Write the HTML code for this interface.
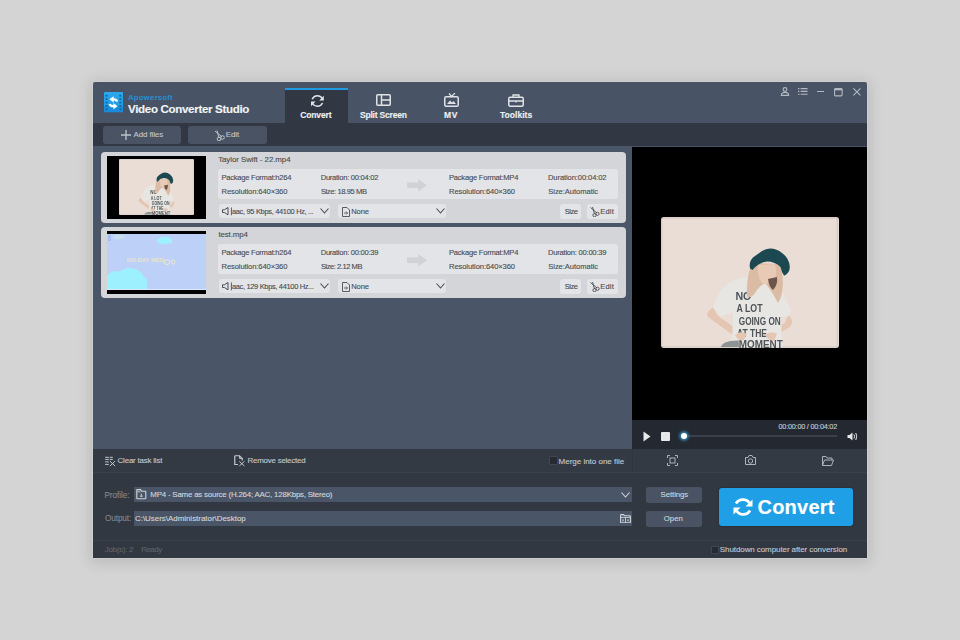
<!DOCTYPE html>
<html><head><meta charset="utf-8">
<style>
*{margin:0;padding:0;box-sizing:border-box}
html,body{width:960px;height:640px;overflow:hidden;background:#d4d4d4;font-family:"Liberation Sans", sans-serif}
.a{position:absolute;display:block}
.t{position:absolute;white-space:nowrap;-webkit-text-stroke:0.12px}
</style></head><body>
<svg width="0" height="0" style="position:absolute"><defs><filter id="soft" x="-10%" y="-10%" width="120%" height="120%"><feGaussianBlur stdDeviation="0.5"/></filter></defs></svg>
<div class="a" style="left:93px;top:82px;width:774px;height:476px;background:#485465;box-shadow:0 0 0 1px rgba(225,225,225,0.35),0 2px 14px 3px rgba(0,0,0,0.12);border-radius:2px 2px 1px 1px"></div>
<div class="a" style="left:93px;top:123px;width:774px;height:23px;background:#323843;"></div>
<div class="a" style="left:284.5px;top:90px;width:63.5px;height:33px;background:#323843;"></div>
<div class="a" style="left:284.5px;top:88px;width:63.5px;height:2.3px;background:#1e9be0;"></div>
<div class="a" style="left:93px;top:146px;width:539px;height:303px;background:#4a5567;"></div>
<div class="a" style="left:632px;top:146.5px;width:235px;height:273.5px;background:#000;"></div>
<div class="a" style="left:632px;top:420px;width:235px;height:29px;background:#242931;"></div>
<div class="a" style="left:93px;top:449px;width:774px;height:23px;background:#333a44;"></div>
<div class="a" style="left:632px;top:449px;width:1px;height:23px;background:#2f353e;"></div>
<div class="a" style="left:93px;top:472px;width:774px;height:86px;background:#323841;"></div>
<div class="a" style="left:93px;top:472px;width:774px;height:1px;background:#3a414b;"></div>
<div class="a" style="left:93px;top:540px;width:774px;height:1px;background:#3a414b;"></div>
<svg class="a" style="left:104px;top:92.3px;" width="19" height="20.3" viewBox="0 0 19 20.3"><defs><linearGradient id="lg" x1="0" y1="0" x2="0" y2="1"><stop offset="0" stop-color="#2ca8ec"/><stop offset="0.68" stop-color="#219ce6"/><stop offset="0.7" stop-color="#1a8fdf"/><stop offset="1" stop-color="#1a8bdc"/></linearGradient></defs><rect x="0" y="0" width="19" height="20.3" rx="0.8" fill="url(#lg)"/><g fill="#0f5f94"><rect x="1.6" y="2.9" width="1.9" height="1.6"/><rect x="15.4" y="2.9" width="1.9" height="1.6"/><rect x="1.6" y="6.3" width="1.9" height="1.6"/><rect x="15.4" y="6.3" width="1.9" height="1.6"/><rect x="1.6" y="9.7" width="1.9" height="1.6"/><rect x="15.4" y="9.7" width="1.9" height="1.6"/><rect x="1.6" y="13.1" width="1.9" height="1.6"/><rect x="15.4" y="13.1" width="1.9" height="1.6"/><rect x="1.6" y="16.5" width="1.9" height="1.6"/><rect x="15.4" y="16.5" width="1.9" height="1.6"/></g><path d="M13 9.6 Q12.6 7.3 9.6 7.3 H8.2" stroke="#fff" stroke-width="2.3" fill="none"/><path d="M5.4 7.3 L9.6 4.2 V10.4 Z" fill="#fff"/><path d="M5.8 12 Q6.2 14.2 9.2 14.2 H10.6" stroke="#fff" stroke-width="2.3" fill="none"/><path d="M13.6 14.2 L9.4 11.1 V17.3 Z" fill="#fff"/></svg>
<div class="t" style="left:128.30px;top:94.00px;font-size:7.8px;line-height:7.8px;color:#1e9be0;font-weight:normal;letter-spacing:0.556px;">Apowersoft</div>
<div class="t" style="left:128.00px;top:103.00px;font-size:11.6px;line-height:11.6px;color:#f2f4f6;font-weight:bold;letter-spacing:-0.345px;">Video Converter Studio</div>
<svg class="a" style="left:309.5px;top:93.5px;" width="15" height="14" viewBox="0 0 15 14"><path d="M12.6 5.0 A5.8 5.8 0 0 0 2.2 5.2" stroke="#dfe3e8" stroke-width="1.5" fill="none"/>
<path d="M2.1 8.8 A5.8 5.8 0 0 0 12.6 9.0" stroke="#dfe3e8" stroke-width="1.5" fill="none"/>
<path d="M13.8 1.8 L13.8 6.4 L9.2 6.4 Z" fill="#dfe3e8"/><path d="M1.0 12.2 L1.0 7.6 L5.6 7.6 Z" fill="#dfe3e8"/></svg>
<div class="t" style="left:300.15px;top:111.00px;font-size:8.5px;line-height:8.5px;color:#eef0f3;font-weight:bold;letter-spacing:-0.125px;">Convert</div>
<svg class="a" style="left:376px;top:94px;" width="15" height="12" viewBox="0 0 15 12"><rect x="0.75" y="0.75" width="13.5" height="10.5" rx="1" stroke="#dfe3e8" stroke-width="1.5" fill="none"/>
<path d="M5.5 1 V11 M5.5 6 H14" stroke="#dfe3e8" stroke-width="1.5"/></svg>
<div class="t" style="left:359.95px;top:111.00px;font-size:8.5px;line-height:8.5px;color:#eef0f3;font-weight:bold;letter-spacing:-0.191px;">Split Screen</div>
<svg class="a" style="left:444px;top:93px;" width="15" height="14" viewBox="0 0 15 14"><rect x="0.75" y="3.75" width="13.5" height="9.5" rx="1.5" stroke="#dfe3e8" stroke-width="1.5" fill="none"/>
<path d="M5 0.5 L7.5 3.5 L11 0" stroke="#dfe3e8" stroke-width="1.2" fill="none"/>
<path d="M3 11 L6 7.5 L8 9.5 L9.5 8 L12 11 Z" fill="#dfe3e8"/></svg>
<div class="t" style="left:444.00px;top:111.00px;font-size:8.5px;line-height:8.5px;color:#eef0f3;font-weight:bold;letter-spacing:0.750px;">MV</div>
<svg class="a" style="left:508px;top:94px;" width="16" height="13" viewBox="0 0 16 13"><rect x="0.75" y="3.25" width="14.5" height="9" rx="1.5" stroke="#dfe3e8" stroke-width="1.5" fill="none"/>
<path d="M5 3 V1 H11 V3 M1 7 H15 M8 6.5 V8.5" stroke="#dfe3e8" stroke-width="1.3" fill="none"/></svg>
<div class="t" style="left:500.00px;top:111.00px;font-size:8.5px;line-height:8.5px;color:#eef0f3;font-weight:bold;letter-spacing:0.036px;">Toolkits</div>
<svg class="a" style="left:780px;top:87px;" width="10" height="9" viewBox="0 0 10 9"><circle cx="5" cy="2.5" r="1.9" stroke="#b3b9c1" stroke-width="1.1" fill="none"/><path d="M1.3 8.4 Q1.3 5.4 5 5.4 Q8.7 5.4 8.7 8.4 Z" stroke="#b3b9c1" stroke-width="1.1" fill="none"/></svg>
<svg class="a" style="left:797.5px;top:88px;" width="10" height="7" viewBox="0 0 10 7"><path d="M0 0.6 H1.4 M2.6 0.6 H9.5 M0 3.4 H1.4 M2.6 3.4 H9.5 M0 6.2 H1.4 M2.6 6.2 H9.5" stroke="#b3b9c1" stroke-width="1.1"/></svg>
<div class="a" style="left:816.7px;top:90.8px;width:7.5px;height:1.6px;background:#b3b9c1;"></div>
<svg class="a" style="left:834.4px;top:87.5px;" width="9" height="9" viewBox="0 0 9 9"><rect x="0.55" y="0.55" width="7.6" height="7.3" rx="1" stroke="#b3b9c1" stroke-width="1.1" fill="none"/><rect x="0.55" y="0.55" width="7.6" height="1.8" fill="#b3b9c1"/></svg>
<svg class="a" style="left:853.3px;top:88px;" width="8" height="8" viewBox="0 0 8 8"><path d="M0.4 0.4 L7.4 7.4 M7.4 0.4 L0.4 7.4" stroke="#b3b9c1" stroke-width="1.1"/></svg>
<div class="a" style="left:103px;top:126px;width:78px;height:18px;background:#4a5363;border-radius:3px"></div>
<div class="a" style="left:188px;top:126px;width:79px;height:18px;background:#4a5363;border-radius:3px"></div>
<svg class="a" style="left:121px;top:130px;" width="10" height="10" viewBox="0 0 10 10"><path d="M5 0 V10 M0 5 H10" stroke="#bfc4cb" stroke-width="1.3"/></svg>
<div class="t" style="left:133.60px;top:131.20px;font-size:8px;line-height:8px;color:#bfc4cb;font-weight:normal;letter-spacing:-0.138px;">Add files</div>
<svg class="a" style="left:214px;top:130px;" width="11" height="11" viewBox="0 0 11 11"><path d="M1 1 L8 7 M3 0.5 L5 8" stroke="#bfc4cb" stroke-width="1"/><circle cx="8.5" cy="7.5" r="1.8" stroke="#bfc4cb" stroke-width="1" fill="none"/><circle cx="5" cy="9" r="1.8" stroke="#bfc4cb" stroke-width="1" fill="none"/></svg>
<div class="t" style="left:225.65px;top:131.00px;font-size:8px;line-height:8px;color:#bfc4cb;font-weight:normal;letter-spacing:-0.067px;">Edit</div>
<div class="a" style="left:101px;top:151.5px;width:525px;height:71px;background:#d4d5d9;border-radius:4px"></div>
<div class="a" style="left:107px;top:155.5px;width:99px;height:63px;background:#000;"></div>
<svg class="a" style="left:119px;top:159px" width="75" height="56" viewBox="0 0 178 131" preserveAspectRatio="none"><rect x="0" y="0" width="178" height="131" rx="3" fill="#e9ddd6"/>
<path d="M0.8 3 Q0.8 0.9 3 0.9 H174 Q176.3 0.9 176.3 3 V128 Q176.3 130 174 130 H3 Q0.8 130 0.8 128 Z" fill="none" stroke="#cbbfb8" stroke-width="0.8"/>
<g filter="url(#soft)"><path d="M52 90 Q44 96 47 100 L76 121 L81 116 L57 99 Z" fill="#e4c6b3"/>
<path d="M127 97 Q134 104 129 110 L110 121 L106 116 L124 106 Z" fill="#e4c6b3"/>
<path d="M73 63 Q58 70 51.8 90.4 L59.7 99.5 L72 95 L71 130 L121 130 L120 100 L127.6 99.5 L130 93 L117 66 Q102 60 86 60 Z" fill="#e8e6e3"/>
<g font-family="Liberation Sans" font-weight="bold" fill="#4d5458">
<text x="74.4" y="82.5" font-size="10.5" textLength="16" lengthAdjust="spacingAndGlyphs">NO</text>
<text x="75.5" y="95" font-size="10.5" textLength="26" lengthAdjust="spacingAndGlyphs">A LOT</text>
<text x="77.8" y="107.5" font-size="10.5" textLength="42" lengthAdjust="spacingAndGlyphs">GOING ON</text>
<text x="76" y="120" font-size="10.5" textLength="30" lengthAdjust="spacingAndGlyphs">AT THE</text>
<text x="77.8" y="130.5" font-size="10.5" textLength="44" lengthAdjust="spacingAndGlyphs">MOMENT</text>
</g>
<path d="M91 46 Q85 60 86 80 Q91 82 96 73 Q100 68 104 66 Q111 74 117 86 Q123 77 121.5 60 Q121 52 119 47 Z" fill="#dbbba3"/>
<path d="M97 48 Q96 60 101 66 Q108 68 114 62 Q116 54 114 47 Z" fill="#e8cab7"/>
<path d="M107 62 Q108 70 112 73 Q117 68 116 60 Z" fill="#6e554c"/>
<path d="M74 118 Q80 113 86 117 L82 124 Q76 123 74 118 Z" fill="#e4c6b3"/>
<path d="M104 118 Q110 113 116 117 L113 124 Q106 123 104 118 Z" fill="#e4c6b3"/>
<path d="M89.1 51.5 Q87.5 45 92 40.5 Q98 36 101 34 Q105 31.5 109 31.5 Q116 31.5 121 36 Q128 41 128.8 49.6 Q129 56 123.1 58.7 Q120.5 55 119.5 50 Q114 44.5 106 44.5 Q97 45.5 91.5 53 Z" fill="#1d4a51"/>
<path d="M59.7 130 Q62 123 77.8 123.5 L78 130 Z" fill="#8e9493"/></g></svg>
<div class="t" style="left:218.15px;top:156.30px;font-size:7.9px;line-height:7.9px;color:#4a4d52;font-weight:normal;letter-spacing:-0.062px;">Taylor Swift - 22.mp4</div>
<div class="a" style="left:218px;top:169.0px;width:400px;height:30px;background:#e3e4e7;border-radius:3px"></div>
<div class="t" style="left:221.50px;top:174.25px;font-size:7.6px;line-height:7.6px;color:#4a4d52;font-weight:normal;letter-spacing:-0.267px;">Package Format:h264</div>
<div class="t" style="left:221.50px;top:187.75px;font-size:7.6px;line-height:7.6px;color:#4a4d52;font-weight:normal;letter-spacing:-0.106px;">Resolution:640×360</div>
<div class="t" style="left:320.70px;top:174.25px;font-size:7.6px;line-height:7.6px;color:#4a4d52;font-weight:normal;letter-spacing:-0.279px;">Duration: 00:04:02</div>
<div class="t" style="left:320.95px;top:187.75px;font-size:7.6px;line-height:7.6px;color:#4a4d52;font-weight:normal;letter-spacing:-0.415px;">Size: 18.95 MB</div>
<svg class="a" style="left:407px;top:178.8px;" width="21" height="13" viewBox="0 0 21 13"><path d="M0 3.6 H11.3 V0 L20 6.25 L11.3 12.5 V8.9 H0 Z" fill="#cfd2d6"/></svg>
<div class="t" style="left:449.00px;top:174.25px;font-size:7.6px;line-height:7.6px;color:#4a4d52;font-weight:normal;letter-spacing:-0.238px;">Package Format:MP4</div>
<div class="t" style="left:449.00px;top:187.75px;font-size:7.6px;line-height:7.6px;color:#4a4d52;font-weight:normal;letter-spacing:-0.100px;">Resolution:640×360</div>
<div class="t" style="left:548.00px;top:174.25px;font-size:7.6px;line-height:7.6px;color:#4a4d52;font-weight:normal;letter-spacing:-0.112px;">Duration:00:04:02</div>
<div class="t" style="left:548.25px;top:187.75px;font-size:7.6px;line-height:7.6px;color:#4a4d52;font-weight:normal;letter-spacing:-0.058px;">Size:Automatic</div>
<div class="a" style="left:219px;top:203.7px;width:111px;height:14.5px;background:#e3e4e7;border-radius:3px"></div>
<svg class="a" style="left:222px;top:207.0px;" width="11" height="9" viewBox="0 0 11 9"><path d="M0.5 2.8 H2.4 L6 0.5 V7.8 L2.4 5.5 H0.5 Z" stroke="#4a4d52" stroke-width="1" fill="none" stroke-linejoin="round"/><path d="M9.4 0.5 V8.3" stroke="#4a4d52" stroke-width="0.9" fill="none"/></svg>
<div class="t" style="left:231.95px;top:207.75px;font-size:7.5px;line-height:7.5px;color:#4a4d52;font-weight:normal;letter-spacing:-0.335px;">aac, 95 Kbps, 44100 Hz, ...</div>
<svg class="a" style="left:319.5px;top:208.0px;" width="9" height="6" viewBox="0 0 9 6"><path d="M0.5 0.5 L4.5 5 L8.5 0.5" stroke="#4a4d52" stroke-width="1.1" fill="none"/></svg>
<div class="a" style="left:338px;top:203.9px;width:108px;height:14px;background:#e3e4e7;border-radius:3px"></div>
<svg class="a" style="left:342px;top:207.0px;" width="8" height="10" viewBox="0 0 8 10"><path d="M0.5 0.5 H5 L7.5 3 V9.5 H0.5 Z" stroke="#4a4d52" stroke-width="0.9" fill="none"/><path d="M2 6 H5.5 M4 4.5 L5.5 6 L4 7.5" stroke="#4a4d52" stroke-width="0.8" fill="none"/></svg>
<div class="t" style="left:351.20px;top:207.75px;font-size:7.6px;line-height:7.6px;color:#4a4d52;font-weight:normal;letter-spacing:-0.083px;">None</div>
<svg class="a" style="left:436px;top:208.0px;" width="9" height="6" viewBox="0 0 9 6"><path d="M0.5 0.5 L4.5 5 L8.5 0.5" stroke="#4a4d52" stroke-width="1.1" fill="none"/></svg>
<div class="a" style="left:560px;top:204.0px;width:21px;height:14.5px;background:#e3e4e7;border-radius:3px"></div>
<div class="t" style="left:564.75px;top:207.75px;font-size:7.5px;line-height:7.5px;color:#4a4d52;font-weight:normal;letter-spacing:-0.500px;">Size</div>
<div class="a" style="left:587px;top:204.0px;width:31px;height:14.5px;background:#e3e4e7;border-radius:3px"></div>
<svg class="a" style="left:590px;top:207.0px;" width="10" height="10" viewBox="0 0 10 10"><path d="M0.5 0.5 L7 6 M2.5 0 L4.5 7" stroke="#4a4d52" stroke-width="0.9"/><circle cx="7.5" cy="6.8" r="1.6" stroke="#4a4d52" stroke-width="0.9" fill="none"/><circle cx="4.5" cy="8.2" r="1.6" stroke="#4a4d52" stroke-width="0.9" fill="none"/></svg>
<div class="t" style="left:600.20px;top:207.75px;font-size:7.5px;line-height:7.5px;color:#4a4d52;font-weight:normal;letter-spacing:0.200px;">Edit</div>
<div class="a" style="left:101px;top:226.5px;width:525px;height:71px;background:#d4d5d9;border-radius:4px"></div>
<div class="a" style="left:107px;top:230.5px;width:99px;height:63px;background:#000;"></div>
<svg class="a" style="left:107px;top:234px" width="99" height="56" viewBox="0 0 99 56">
<rect x="0" y="0" width="99" height="56" fill="#bdd0f8"/>
<g fill="#9df0fd">
<ellipse cx="23" cy="46" rx="14" ry="12"/><ellipse cx="9" cy="46" rx="10" ry="9"/><ellipse cx="33" cy="49" rx="7" ry="8"/><rect x="0" y="47" width="40" height="9"/>
<ellipse cx="57.5" cy="6.5" rx="7.5" ry="3.8"/><rect x="50" y="6" width="15" height="3"/>
</g>
<ellipse cx="12" cy="3" rx="6" ry="2.2" fill="#c6dcee"/><rect x="1" y="1" width="3" height="6" fill="#a9bdf2"/>
<text x="19" y="27.5" font-family="Liberation Sans" font-weight="bold" font-size="5" fill="#e9e2cf" textLength="38" lengthAdjust="spacingAndGlyphs">100-DAY MED</text>
<circle cx="60" cy="28" r="2.5" fill="none" stroke="#e6e0d4" stroke-width="1.2"/><circle cx="66" cy="28" r="1.8" fill="none" stroke="#e6e0d4" stroke-width="1.2"/>
<rect x="0" y="55" width="99" height="1" fill="#dfe8fb"/>
</svg>
<div class="t" style="left:218.40px;top:231.30px;font-size:7.9px;line-height:7.9px;color:#4a4d52;font-weight:normal;letter-spacing:-0.100px;">test.mp4</div>
<div class="a" style="left:218px;top:244.0px;width:400px;height:30px;background:#e3e4e7;border-radius:3px"></div>
<div class="t" style="left:221.50px;top:249.25px;font-size:7.6px;line-height:7.6px;color:#4a4d52;font-weight:normal;letter-spacing:-0.267px;">Package Format:h264</div>
<div class="t" style="left:221.50px;top:262.75px;font-size:7.6px;line-height:7.6px;color:#4a4d52;font-weight:normal;letter-spacing:-0.106px;">Resolution:640×360</div>
<div class="t" style="left:320.70px;top:249.25px;font-size:7.6px;line-height:7.6px;color:#4a4d52;font-weight:normal;letter-spacing:-0.279px;">Duration: 00:00:39</div>
<div class="t" style="left:320.95px;top:262.75px;font-size:7.6px;line-height:7.6px;color:#4a4d52;font-weight:normal;letter-spacing:-0.479px;">Size: 2.12 MB</div>
<svg class="a" style="left:407px;top:253.8px;" width="21" height="13" viewBox="0 0 21 13"><path d="M0 3.6 H11.3 V0 L20 6.25 L11.3 12.5 V8.9 H0 Z" fill="#cfd2d6"/></svg>
<div class="t" style="left:449.00px;top:249.25px;font-size:7.6px;line-height:7.6px;color:#4a4d52;font-weight:normal;letter-spacing:-0.238px;">Package Format:MP4</div>
<div class="t" style="left:449.00px;top:262.75px;font-size:7.6px;line-height:7.6px;color:#4a4d52;font-weight:normal;letter-spacing:-0.100px;">Resolution:640×360</div>
<div class="t" style="left:548.00px;top:249.25px;font-size:7.6px;line-height:7.6px;color:#4a4d52;font-weight:normal;letter-spacing:-0.238px;">Duration: 00:00:39</div>
<div class="t" style="left:548.25px;top:262.75px;font-size:7.6px;line-height:7.6px;color:#4a4d52;font-weight:normal;letter-spacing:-0.058px;">Size:Automatic</div>
<div class="a" style="left:219px;top:278.7px;width:111px;height:14.5px;background:#e3e4e7;border-radius:3px"></div>
<svg class="a" style="left:222px;top:282.0px;" width="11" height="9" viewBox="0 0 11 9"><path d="M0.5 2.8 H2.4 L6 0.5 V7.8 L2.4 5.5 H0.5 Z" stroke="#4a4d52" stroke-width="1" fill="none" stroke-linejoin="round"/><path d="M9.4 0.5 V8.3" stroke="#4a4d52" stroke-width="0.9" fill="none"/></svg>
<div class="t" style="left:231.95px;top:282.75px;font-size:7.5px;line-height:7.5px;color:#4a4d52;font-weight:normal;letter-spacing:-0.348px;">aac, 129 Kbps, 44100 Hz...</div>
<svg class="a" style="left:319.5px;top:283.0px;" width="9" height="6" viewBox="0 0 9 6"><path d="M0.5 0.5 L4.5 5 L8.5 0.5" stroke="#4a4d52" stroke-width="1.1" fill="none"/></svg>
<div class="a" style="left:338px;top:278.9px;width:108px;height:14px;background:#e3e4e7;border-radius:3px"></div>
<svg class="a" style="left:342px;top:282.0px;" width="8" height="10" viewBox="0 0 8 10"><path d="M0.5 0.5 H5 L7.5 3 V9.5 H0.5 Z" stroke="#4a4d52" stroke-width="0.9" fill="none"/><path d="M2 6 H5.5 M4 4.5 L5.5 6 L4 7.5" stroke="#4a4d52" stroke-width="0.8" fill="none"/></svg>
<div class="t" style="left:351.20px;top:282.75px;font-size:7.6px;line-height:7.6px;color:#4a4d52;font-weight:normal;letter-spacing:-0.083px;">None</div>
<svg class="a" style="left:436px;top:283.0px;" width="9" height="6" viewBox="0 0 9 6"><path d="M0.5 0.5 L4.5 5 L8.5 0.5" stroke="#4a4d52" stroke-width="1.1" fill="none"/></svg>
<div class="a" style="left:560px;top:279.0px;width:21px;height:14.5px;background:#e3e4e7;border-radius:3px"></div>
<div class="t" style="left:564.75px;top:282.75px;font-size:7.5px;line-height:7.5px;color:#4a4d52;font-weight:normal;letter-spacing:-0.500px;">Size</div>
<div class="a" style="left:587px;top:279.0px;width:31px;height:14.5px;background:#e3e4e7;border-radius:3px"></div>
<svg class="a" style="left:590px;top:282.0px;" width="10" height="10" viewBox="0 0 10 10"><path d="M0.5 0.5 L7 6 M2.5 0 L4.5 7" stroke="#4a4d52" stroke-width="0.9"/><circle cx="7.5" cy="6.8" r="1.6" stroke="#4a4d52" stroke-width="0.9" fill="none"/><circle cx="4.5" cy="8.2" r="1.6" stroke="#4a4d52" stroke-width="0.9" fill="none"/></svg>
<div class="t" style="left:600.20px;top:282.75px;font-size:7.5px;line-height:7.5px;color:#4a4d52;font-weight:normal;letter-spacing:0.200px;">Edit</div>
<svg class="a" style="left:661px;top:217px" width="178" height="131" viewBox="0 0 178 131"><rect x="0" y="0" width="178" height="131" rx="3" fill="#e9ddd6"/>
<path d="M0.8 3 Q0.8 0.9 3 0.9 H174 Q176.3 0.9 176.3 3 V128 Q176.3 130 174 130 H3 Q0.8 130 0.8 128 Z" fill="none" stroke="#cbbfb8" stroke-width="0.8"/>
<g filter="url(#soft)"><path d="M52 90 Q44 96 47 100 L76 121 L81 116 L57 99 Z" fill="#e4c6b3"/>
<path d="M127 97 Q134 104 129 110 L110 121 L106 116 L124 106 Z" fill="#e4c6b3"/>
<path d="M73 63 Q58 70 51.8 90.4 L59.7 99.5 L72 95 L71 130 L121 130 L120 100 L127.6 99.5 L130 93 L117 66 Q102 60 86 60 Z" fill="#e8e6e3"/>
<g font-family="Liberation Sans" font-weight="bold" fill="#4d5458">
<text x="74.4" y="82.5" font-size="10.5" textLength="16" lengthAdjust="spacingAndGlyphs">NO</text>
<text x="75.5" y="95" font-size="10.5" textLength="26" lengthAdjust="spacingAndGlyphs">A LOT</text>
<text x="77.8" y="107.5" font-size="10.5" textLength="42" lengthAdjust="spacingAndGlyphs">GOING ON</text>
<text x="76" y="120" font-size="10.5" textLength="30" lengthAdjust="spacingAndGlyphs">AT THE</text>
<text x="77.8" y="130.5" font-size="10.5" textLength="44" lengthAdjust="spacingAndGlyphs">MOMENT</text>
</g>
<path d="M91 46 Q85 60 86 80 Q91 82 96 73 Q100 68 104 66 Q111 74 117 86 Q123 77 121.5 60 Q121 52 119 47 Z" fill="#dbbba3"/>
<path d="M97 48 Q96 60 101 66 Q108 68 114 62 Q116 54 114 47 Z" fill="#e8cab7"/>
<path d="M107 62 Q108 70 112 73 Q117 68 116 60 Z" fill="#6e554c"/>
<path d="M74 118 Q80 113 86 117 L82 124 Q76 123 74 118 Z" fill="#e4c6b3"/>
<path d="M104 118 Q110 113 116 117 L113 124 Q106 123 104 118 Z" fill="#e4c6b3"/>
<path d="M89.1 51.5 Q87.5 45 92 40.5 Q98 36 101 34 Q105 31.5 109 31.5 Q116 31.5 121 36 Q128 41 128.8 49.6 Q129 56 123.1 58.7 Q120.5 55 119.5 50 Q114 44.5 106 44.5 Q97 45.5 91.5 53 Z" fill="#1d4a51"/>
<path d="M59.7 130 Q62 123 77.8 123.5 L78 130 Z" fill="#8e9493"/></g></svg>
<svg class="a" style="left:643px;top:431px;" width="8" height="11" viewBox="0 0 8 11"><path d="M0.5 0.5 L7.5 5.5 L0.5 10.5 Z" fill="#e6e8eb"/></svg>
<div class="a" style="left:661px;top:432px;width:9px;height:9px;background:#e6e8eb;border-radius:1px"></div>
<div class="a" style="left:687px;top:435.3px;width:149.5px;height:2px;background:#3a414b;"></div>
<div class="a" style="left:680.5px;top:433px;width:6px;height:6px;border-radius:50%;background:#fff;box-shadow:0 0 3px 1.5px rgba(60,170,230,0.8)"></div>
<div class="t" style="left:778.50px;top:422.80px;font-size:7.2px;line-height:7.2px;color:#c8ccd2;font-weight:normal;letter-spacing:-0.181px;">00:00:00 / 00:04:02</div>
<svg class="a" style="left:847px;top:432px;" width="11" height="9" viewBox="0 0 11 9"><path d="M0.5 3 H2.5 L5.5 0.5 V8.5 L2.5 6 H0.5 Z" fill="#e6e8eb"/><path d="M7 2.5 Q8 4.5 7 6.5 M8.8 1 Q10.6 4.5 8.8 8" stroke="#e6e8eb" stroke-width="1" fill="none"/></svg>
<svg class="a" style="left:667px;top:455px;" width="11" height="11" viewBox="0 0 11 11"><path d="M0.5 3 V0.5 H3 M8 0.5 H10.5 V3 M10.5 8 V10.5 H8 M3 10.5 H0.5 V8" stroke="#aeb3ba" stroke-width="1" fill="none"/><rect x="3" y="3" width="5" height="5" stroke="#aeb3ba" stroke-width="1" fill="none"/></svg>
<svg class="a" style="left:744.5px;top:455.3px;" width="11" height="10" viewBox="0 0 11 10"><path d="M0.5 2.5 H3 L4 0.5 H7 L8 2.5 H10.5 V9.5 H0.5 Z" stroke="#aeb3ba" stroke-width="1" fill="none"/><circle cx="5.5" cy="6" r="2.2" stroke="#aeb3ba" stroke-width="1" fill="none"/></svg>
<svg class="a" style="left:822px;top:456px;" width="12" height="10" viewBox="0 0 12 10"><path d="M0.5 0.5 H4 L5 2 H10 V4 M0.5 0.5 V9.5 H9.5 L11.5 4 H2.5 L0.5 9.5" stroke="#aeb3ba" stroke-width="1" fill="none"/></svg>
<svg class="a" style="left:105px;top:456px;" width="11" height="11" viewBox="0 0 11 11"><path d="M0.2 1.3 H3.75 M4.7 1.3 H7.8 M0.2 3.4 H3.75 M4.7 3.4 H7.8 M0.2 5.9 H3.75 M0.2 8.4 H3.75" stroke="#c3c7cd" stroke-width="1"/><path d="M4.9 5.1 L10.1 10.1 M10.1 5.1 L4.9 10.1" stroke="#c3c7cd" stroke-width="1"/></svg>
<div class="t" style="left:117.60px;top:457.10px;font-size:7.9px;line-height:7.9px;color:#c3c7cd;font-weight:normal;letter-spacing:-0.186px;">Clear task list</div>
<svg class="a" style="left:233.5px;top:455px;" width="12" height="12" viewBox="0 0 12 12"><path d="M0.75 0.75 H5.5 L8.25 3.5 V5.5 M0.75 0.75 V9.5 H4" stroke="#c3c7cd" stroke-width="1.2" fill="none"/><path d="M5.5 0.75 V3.5 H8.25" stroke="#c3c7cd" stroke-width="0.9" fill="none"/><path d="M5.3 6.4 L10.4 11 M10.4 6.4 L5.3 11" stroke="#c3c7cd" stroke-width="1"/></svg>
<div class="t" style="left:247.55px;top:457.10px;font-size:7.9px;line-height:7.9px;color:#c3c7cd;font-weight:normal;letter-spacing:-0.211px;">Remove selected</div>
<div class="a" style="left:548.5px;top:455.5px;width:9px;height:9px;background:#262b33;border:1px solid #3f4650;border-radius:1px"></div>
<div class="t" style="left:558.55px;top:457.60px;font-size:8px;line-height:8px;color:#c3c7cd;font-weight:normal;letter-spacing:-0.008px;">Merge into one file</div>
<div class="t" style="left:104.45px;top:491.95px;font-size:8.2px;line-height:8.2px;color:#80868e;font-weight:normal;letter-spacing:-0.057px;">Profile:</div>
<div class="t" style="left:104.95px;top:515.25px;font-size:8.2px;line-height:8.2px;color:#80868e;font-weight:normal;letter-spacing:-0.083px;">Output:</div>
<div class="a" style="left:133.5px;top:487px;width:498.5px;height:15px;background:#4a5567;"></div>
<div class="a" style="left:133.5px;top:511px;width:498.5px;height:15px;background:#4a5567;"></div>
<svg class="a" style="left:135.5px;top:488.8px;" width="11" height="11" viewBox="0 0 11 11"><path d="M0.8 1.2 Q0.8 0.6 1.4 0.6 H4.6 L5.4 2.2 H9.2 Q9.8 2.2 9.8 2.8 V9.2 Q9.8 9.8 9.2 9.8 H1.4 Q0.8 9.8 0.8 9.2 Z" stroke="#d2d6dc" stroke-width="1.1" fill="none"/><path d="M1.5 2.8 H4.2 M5.3 4.6 V8 M4 7.2 H6.6" stroke="#d2d6dc" stroke-width="0.9" fill="none"/></svg>
<div class="t" style="left:150.35px;top:491.00px;font-size:7.9px;line-height:7.9px;color:#d2d6dc;font-weight:normal;letter-spacing:-0.204px;">MP4 - Same as source (H.264; AAC, 128Kbps, Stereo)</div>
<div class="t" style="left:135.00px;top:514.80px;font-size:7.9px;line-height:7.9px;color:#d2d6dc;font-weight:normal;letter-spacing:0.009px;">C:\Users\Administrator\Desktop</div>
<svg class="a" style="left:620.6px;top:491.8px;" width="9" height="6" viewBox="0 0 9 6"><path d="M0.5 0.5 L4.5 5 L8.5 0.5" stroke="#d2d6dc" stroke-width="1.1" fill="none"/></svg>
<svg class="a" style="left:619.5px;top:513.8px;" width="11" height="9.5" viewBox="0 0 11 9.5"><path d="M0.6 1.2 Q0.6 0.6 1.2 0.6 H3.6 L4.4 1.8 H9.8 Q10.4 1.8 10.4 2.4 V8.3 Q10.4 8.9 9.8 8.9 H1.2 Q0.6 8.9 0.6 8.3 Z" stroke="#d2d6dc" stroke-width="1.1" fill="none"/><path d="M0.6 3.4 H10.4 M5.5 3.4 V8.9" stroke="#d2d6dc" stroke-width="0.9"/><rect x="2" y="5.3" width="2" height="2" fill="#d2d6dc" opacity="0.6"/><rect x="7" y="5.3" width="2" height="2" fill="#d2d6dc" opacity="0.6"/></svg>
<div class="a" style="left:645.5px;top:486.5px;width:56.5px;height:16.5px;background:#4a5363;border-radius:3px"></div>
<div class="a" style="left:645.5px;top:510.5px;width:56.5px;height:16px;background:#4a5363;border-radius:3px"></div>
<div class="t" style="left:660.50px;top:490.80px;font-size:7.8px;line-height:7.8px;color:#d0d4da;font-weight:normal;letter-spacing:-0.057px;">Settings</div>
<div class="t" style="left:663.75px;top:514.50px;font-size:7.8px;line-height:7.8px;color:#d0d4da;font-weight:normal;letter-spacing:0.000px;">Open</div>
<div class="a" style="left:719px;top:487.5px;width:133.5px;height:38.5px;background:#1fa0e6;border-radius:3px;box-shadow:0 0 2px rgba(0,0,0,0.4)"></div>
<svg class="a" style="left:732px;top:497px;" width="22" height="20" viewBox="0 0 22 20"><path d="M18.2 7.5 A8 8 0 0 0 4.0 6.5" stroke="#fff" stroke-width="2.8" fill="none"/>
<path d="M3.8 12.5 A8 8 0 0 0 18.0 13.5" stroke="#fff" stroke-width="2.8" fill="none"/>
<path d="M20.5 2.5 L20.5 9.5 L13.5 9.5 Z" fill="#fff"/><path d="M1.5 17.5 L1.5 10.5 L8.5 10.5 Z" fill="#fff"/></svg>
<div class="t" style="left:757.55px;top:497.45px;font-size:20px;line-height:20px;color:#ffffff;font-weight:bold;letter-spacing:0.208px;">Convert</div>
<div class="t" style="left:104.75px;top:545.90px;font-size:8px;line-height:8px;color:#5c636c;font-weight:normal;letter-spacing:-0.312px;">Job(s): 2</div>
<div class="t" style="left:141.25px;top:545.90px;font-size:8px;line-height:8px;color:#5c636c;font-weight:normal;letter-spacing:-0.562px;">Ready</div>
<div class="a" style="left:710.5px;top:545.5px;width:8px;height:8px;background:#262b33;border:1px solid #3f4650"></div>
<div class="t" style="left:719.80px;top:546.20px;font-size:8px;line-height:8px;color:#c3c7cd;font-weight:normal;letter-spacing:-0.086px;">Shutdown computer after conversion</div>
</body></html>
